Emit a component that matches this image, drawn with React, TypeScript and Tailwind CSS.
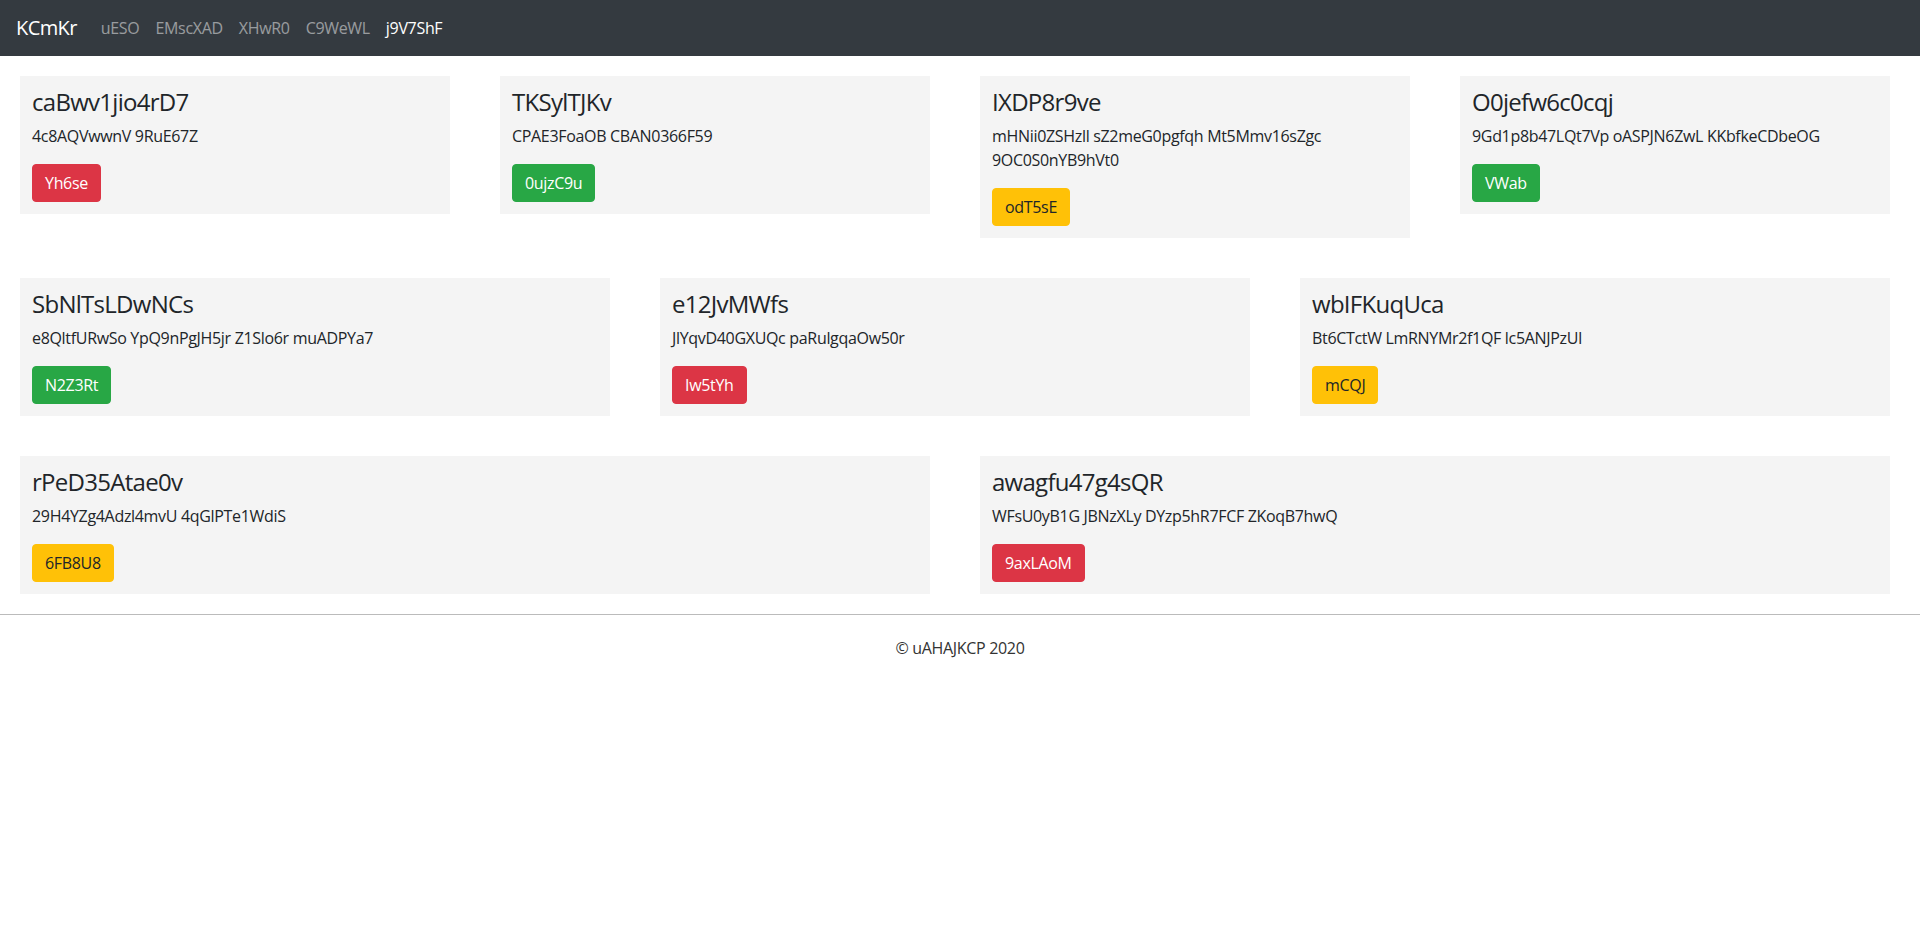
import React from 'react';

type Variant = 'danger' | 'success' | 'warning';

interface CardData {
  title: string;
  text: string;
  button: string;
  variant: Variant;
}

const rows: CardData[][] = [
  [
    { title: 'caBwv1jio4rD7', text: '4c8AQVwwnV 9RuE67Z', button: 'Yh6se', variant: 'danger' },
    { title: 'TKSylTJKv', text: 'CPAE3FoaOB CBAN0366F59', button: '0ujzC9u', variant: 'success' },
    {
      title: 'IXDP8r9ve',
      text: 'mHNii0ZSHzll sZ2meG0pgfqh Mt5Mmv16sZgc 9OC0S0nYB9hVt0',
      button: 'odT5sE',
      variant: 'warning',
    },
    { title: 'O0jefw6c0cqj', text: '9Gd1p8b47LQt7Vp oASPJN6ZwL KKbfkeCDbeOG', button: 'VWab', variant: 'success' },
  ],
  [
    { title: 'SbNlTsLDwNCs', text: 'e8QltfURwSo YpQ9nPgJH5jr Z1Slo6r muADPYa7', button: 'N2Z3Rt', variant: 'success' },
    { title: 'e12JvMWfs', text: 'JlYqvD40GXUQc paRulgqaOw50r', button: 'Iw5tYh', variant: 'danger' },
    { title: 'wbIFKuqUca', text: 'Bt6CTctW LmRNYMr2f1QF lc5ANJPzUI', button: 'mCQJ', variant: 'warning' },
  ],
  [
    { title: 'rPeD35Atae0v', text: '29H4YZg4Adzl4mvU 4qGlPTe1WdiS', button: '6FB8U8', variant: 'warning' },
    { title: 'awagfu47g4sQR', text: 'WFsU0yB1G JBNzXLy DYzp5hR7FCF ZKoqB7hwQ', button: '9axLAoM', variant: 'danger' },
  ],
];

const navLinks = ['uESO', 'EMscXAD', 'XHwR0', 'C9WeWL', 'j9V7ShF'];

const buttonStyles: Record<Variant, string> = {
  danger: 'bg-[#dc3545] border-[#dc3545] text-white',
  success: 'bg-[#28a745] border-[#28a745] text-white',
  warning: 'bg-[#ffc107] border-[#ffc107] text-[#212529]',
};

const gridCols: Record<number, string> = {
  2: 'grid-cols-2',
  3: 'grid-cols-3',
  4: 'grid-cols-4',
};

const Card: React.FC<{ data: CardData }> = ({ data }) => (
  <div className="ml-5 mr-[30px] my-5 bg-[#f4f4f4] p-3">
    <h4 className="mb-2 text-2xl leading-[28px] tracking-[-0.03em] text-[#212529]">{data.title}</h4>
    <p className="mb-4 text-base leading-6 text-[#212529]">{data.text}</p>
    <button
      className={`block rounded border px-3 py-1.5 text-base leading-6 ${buttonStyles[data.variant]}`}
    >
      {data.button}
    </button>
  </div>
);

export default function App() {
  return (
    <div className="min-h-[925px] bg-white font-['Open_Sans',sans-serif] tracking-[-0.02em] text-[#212529]">
      <nav className="flex h-14 items-center bg-[#343a40] px-4">
        <span className="mr-4 text-xl leading-[30px] tracking-[-0.03em] text-white">KCmKr</span>
        <ul className="flex">
          {navLinks.map((link, i) => (
            <li key={link}>
              <a
                href="#"
                className={`block px-2 py-2 text-base leading-6 ${
                  i === navLinks.length - 1 ? 'text-white' : 'text-white/50'
                }`}
              >
                {link}
              </a>
            </li>
          ))}
        </ul>
      </nav>

      <main>
        {rows.map((row, r) => (
          <div key={r} className={`grid items-start ${gridCols[row.length]}`}>
            {row.map((card) => (
              <Card key={card.title} data={card} />
            ))}
          </div>
        ))}
      </main>

      <footer className="border-t border-[#bbbbbb] pt-[21px] text-center text-base leading-6 text-[#333]">
        © uAHAJKCP 2020
      </footer>
    </div>
  );
}
